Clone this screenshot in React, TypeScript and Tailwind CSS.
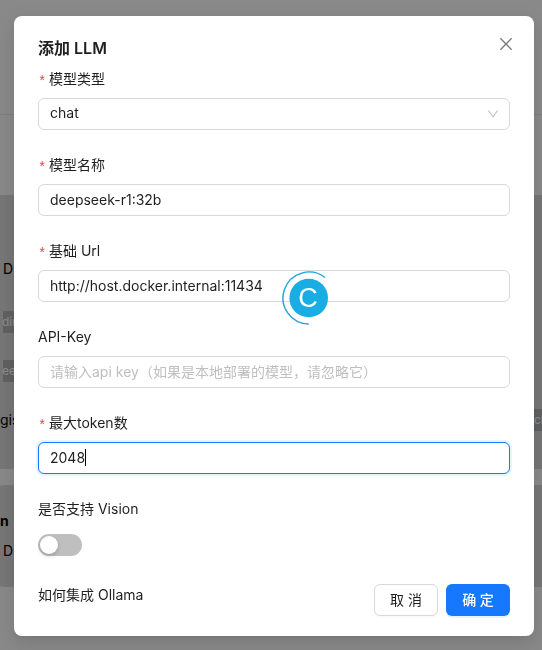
import { useState } from 'react';
import type { ReactNode } from 'react';

const inputClass =
  'block h-8 w-full rounded-md border border-[#d9d9d9] bg-white px-[11px] pb-0.5 text-sm text-[#1f1f1f] outline-none placeholder:text-[#bfbfbf] focus:border-[#1677ff]';

interface FieldProps {
  id: string;
  label: string;
  required?: boolean;
  children: ReactNode;
}

function Field({ id, label, required, children }: FieldProps) {
  return (
    <div className="mb-6">
      <label htmlFor={id} className="mb-2 flex h-[22px] items-center text-sm leading-[22px]">
        {required && (
          <span className="mr-1 w-[7px] pt-1.5 text-left font-['Liberation_Mono'] text-[#e0424a]">*</span>
        )}
        {label}
      </label>
      <div className="relative">{children}</div>
    </div>
  );
}

function CloseIcon() {
  return (
    <svg viewBox="64 64 896 896" className="h-4 w-4" fill="currentColor" aria-hidden="true">
      <path d="M799.9 166.3l57.8 57.8L569.9 512l287.8 287.8-57.8 57.9L512 569.9 224.2 857.7l-57.9-57.8L454.1 512 166.3 224.2l57.8-57.9L512 454.1z" />
    </svg>
  );
}

function DownIcon() {
  return (
    <svg
      viewBox="64 64 896 896"
      className="pointer-events-none absolute right-[11px] top-[10px] h-3 w-3 text-[#bfbfbf]"
      fill="currentColor"
      aria-hidden="true"
    >
      <path d="M884 256h-75c-5.1 0-9.9 2.5-12.9 6.6L512 654.2 227.9 262.6c-3-4.1-7.8-6.6-12.9-6.6h-75c-6.5 0-10.3 7.4-6.5 12.7l352.6 486.1c12.8 17.6 39 17.6 51.7 0l352.6-486.1c3.9-5.3.1-12.7-6.4-12.7z" />
    </svg>
  );
}

// Round marker with a partial ring, floats over the url field
function CursorBadge() {
  return (
    <div className="pointer-events-none absolute left-[244px] top-px flex h-[54px] w-[54px] items-center justify-center">
      <svg viewBox="0 0 54 54" className="absolute inset-0" fill="none" aria-hidden="true">
        <circle cx="26.7" cy="27" r="19.3" fill="#1aade3" />
        <path d="M26.7 53A26 26 0 1 1 43 6.5" stroke="#1aa3dc" strokeWidth="1.4" />
      </svg>
      <span className="relative pr-0.5 font-['Liberation_Sans'] text-[27px] leading-8 text-white">C</span>
    </div>
  );
}

function ModelPage() {
  return (
    <div className="h-screen overflow-hidden bg-[#fafafa] text-sm leading-[22px] text-black" aria-hidden="true">
      <div className="mb-20 h-[115px] border-b border-[#e6e6e6]" />
      <div className="-ml-2 mb-4 h-[274px] rounded-l-lg bg-[#d8d8d8] pl-2 pt-[63px]">
        <div className="mb-[31px] pl-[3px]">D</div>
        <div className="mb-[27px] ml-[3px] h-[22px] w-20 bg-[#b0b0b0] -indent-px text-xs leading-[22px] text-white">
          din
        </div>
        <div className="mb-[27px] ml-[3px] h-[22px] w-20 bg-[#b0b0b0] -indent-px text-xs leading-[22px] text-white">
          eec
        </div>
        <div className="flex justify-between">
          <span>gis</span>
          <span className="h-[22px] w-2 overflow-hidden bg-[#b0b0b0] text-xs leading-[22px] text-white">ch</span>
        </div>
      </div>
      <div className="-ml-1 h-[102px] rounded-l-lg bg-[#d8d8d8] pl-1 pt-[25px]">
        <div className="mb-2 font-bold">n</div>
        <div className="pl-[3px]">D</div>
      </div>
    </div>
  );
}

export default function App() {
  const [type, setType] = useState('chat');
  const [name, setName] = useState('deepseek-r1:32b');
  const [url, setUrl] = useState('http://host.docker.internal:11434');
  const [apiKey, setApiKey] = useState('');
  const [maxTokens, setMaxTokens] = useState('2048');
  const [vision, setVision] = useState(false);

  return (
    <div className="font-['Inter','Noto_Sans_CJK_SC',sans-serif]">
      <ModelPage />

      <div className="fixed inset-0 overflow-auto bg-black/45 pb-3 pl-[14px] pr-2 pt-4">
        <div
          role="dialog"
          aria-labelledby="dialog-title"
          className="relative max-w-[520px] rounded-lg bg-white px-6 py-5 text-[#1f1f1f] shadow-[0_6px_16px_0_rgba(0,0,0,0.08),0_3px_6px_-4px_rgba(0,0,0,0.12),0_9px_28px_8px_rgba(0,0,0,0.05)]"
        >
          <button
            type="button"
            aria-label="Close"
            className="absolute right-3 top-3 flex h-8 w-8 cursor-pointer items-center justify-center text-[#808080]"
          >
            <CloseIcon />
          </button>

          <h1 id="dialog-title" className="mb-2 text-base font-semibold leading-6">
            添加 LLM
          </h1>

          <form onSubmit={(e) => e.preventDefault()}>
            <Field id="type" label="模型类型" required>
              <select
                id="type"
                value={type}
                onChange={(e) => setType(e.target.value)}
                className={`${inputClass} appearance-none`}
              >
                <option value="chat">chat</option>
              </select>
              <DownIcon />
            </Field>

            <Field id="name" label="模型名称" required>
              <input id="name" value={name} onChange={(e) => setName(e.target.value)} className={inputClass} />
            </Field>

            <Field id="url" label="基础 Url" required>
              <input id="url" value={url} onChange={(e) => setUrl(e.target.value)} className={inputClass} />
              <CursorBadge />
            </Field>

            <Field id="api-key" label="API-Key">
              <input
                id="api-key"
                value={apiKey}
                onChange={(e) => setApiKey(e.target.value)}
                placeholder="请输入api key（如果是本地部署的模型，请忽略它）"
                className={inputClass}
              />
            </Field>

            <Field id="max-tokens" label="最大token数" required>
              <input
                id="max-tokens"
                value={maxTokens}
                onChange={(e) => setMaxTokens(e.target.value)}
                className="block h-8 w-full rounded-md border border-[#1677ff] bg-white px-[11px] pb-0.5 text-sm text-[#1f1f1f] caret-transparent shadow-[0_0_0_2px_rgba(5,145,255,0.1)] outline-none"
              />
              <span className="pointer-events-none absolute left-[47px] top-[7px] h-[17px] w-px bg-black" />
            </Field>

            <Field id="vision" label="是否支持 Vision">
              <div className="flex h-8 items-center">
                <input
                  id="vision"
                  type="checkbox"
                  role="switch"
                  checked={vision}
                  onChange={(e) => setVision(e.target.checked)}
                  className="mt-0.5 h-[22px] w-11 cursor-pointer appearance-none rounded-full bg-[#bfbfbf] p-0.5 before:block before:h-[18px] before:w-[18px] before:rounded-full before:bg-white before:shadow-[0_2px_4px_0_rgba(0,35,11,0.2)] before:transition-transform checked:bg-[#1677ff] checked:before:translate-x-[22px]"
                />
              </div>
            </Field>

            <div className="flex items-start justify-between">
              <a href="#ollama" className="text-sm leading-[22px]">
                如何集成 Ollama
              </a>
              <div className="flex gap-2">
                <button
                  type="button"
                  className="h-8 w-16 cursor-pointer rounded-md border border-[#d9d9d9] bg-white text-sm shadow-[0_2px_0_rgba(0,0,0,0.02)]"
                >
                  取 消
                </button>
                <button
                  type="submit"
                  className="h-8 w-16 cursor-pointer rounded-md bg-[#1677ff] text-sm font-medium text-white shadow-[0_2px_0_rgba(5,145,255,0.1)]"
                >
                  确 定
                </button>
              </div>
            </div>
          </form>
        </div>
      </div>
    </div>
  );
}
